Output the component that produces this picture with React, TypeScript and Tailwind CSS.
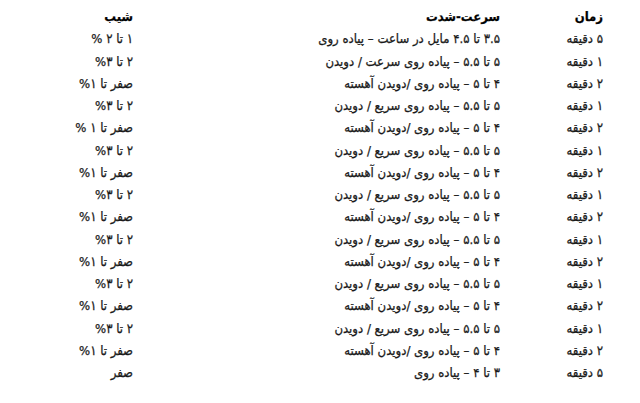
import React from "react";

const rows: [string, string, string][] = [
  ["۵ دقیقه", "۳.۵ تا ۴.۵ مایل در ساعت – پیاده روی", "۱ تا ۲ %"],
  ["۱ دقیقه", "۵ تا ۵.۵ – پیاده روی سرعت / دویدن", "۲ تا ۳%"],
  ["۲ دقیقه", "۴ تا ۵ – پیاده روی /دویدن آهسته", "صفر تا ۱%"],
  ["۱ دقیقه", "۵ تا ۵.۵ – پیاده روی سریع / دویدن", "۲ تا ۳%"],
  ["۲ دقیقه", "۴ تا ۵ – پیاده روی /دویدن آهسته", "صفر تا ۱ %"],
  ["۱ دقیقه", "۵ تا ۵.۵ – پیاده روی سریع / دویدن", "۲ تا ۳%"],
  ["۲ دقیقه", "۴ تا ۵ – پیاده روی /دویدن آهسته", "صفر تا ۱%"],
  ["۱ دقیقه", "۵ تا ۵.۵ – پیاده روی سریع / دویدن", "۲ تا ۳%"],
  ["۲ دقیقه", "۴ تا ۵ – پیاده روی /دویدن آهسته", "صفر تا ۱%"],
  ["۱ دقیقه", "۵ تا ۵.۵ – پیاده روی سریع / دویدن", "۲ تا ۳%"],
  ["۲ دقیقه", "۴ تا ۵ – پیاده روی /دویدن آهسته", "صفر تا ۱%"],
  ["۱ دقیقه", "۵ تا ۵.۵ – پیاده روی سریع / دویدن", "۲ تا ۳%"],
  ["۲ دقیقه", "۴ تا ۵ – پیاده روی /دویدن آهسته", "صفر تا ۱%"],
  ["۱ دقیقه", "۵ تا ۵.۵ – پیاده روی سریع / دویدن", "۲ تا ۳%"],
  ["۲ دقیقه", "۴ تا ۵ – پیاده روی /دویدن آهسته", "صفر تا ۱%"],
  ["۵ دقیقه", "۳ تا ۴ – پیاده روی", "صفر"],
];

export default function App() {
  return (
    <div
      dir="rtl"
      className="w-[640px] h-[403px] bg-white text-[#1a1a1a] pt-[6px] pr-[37px] text-[13px] leading-[22.25px] [-webkit-text-stroke:0.25px_#1a1a1a]"
      style={{ fontFamily: '"DejaVu Sans Condensed", "DejaVu Sans", sans-serif' }}
    >
      <div className="flex font-bold text-black">
        <div className="w-[103px]">زمان</div>
        <div className="w-[367px]">سرعت-شدت</div>
        <div>شیب</div>
      </div>
      {rows.map((r, i) => (
        <div key={i} className="flex">
          <div className="w-[103px]">{r[0]}</div>
          <div className="w-[367px]">{r[1]}</div>
          <div>{r[2]}</div>
        </div>
      ))}
    </div>
  );
}
